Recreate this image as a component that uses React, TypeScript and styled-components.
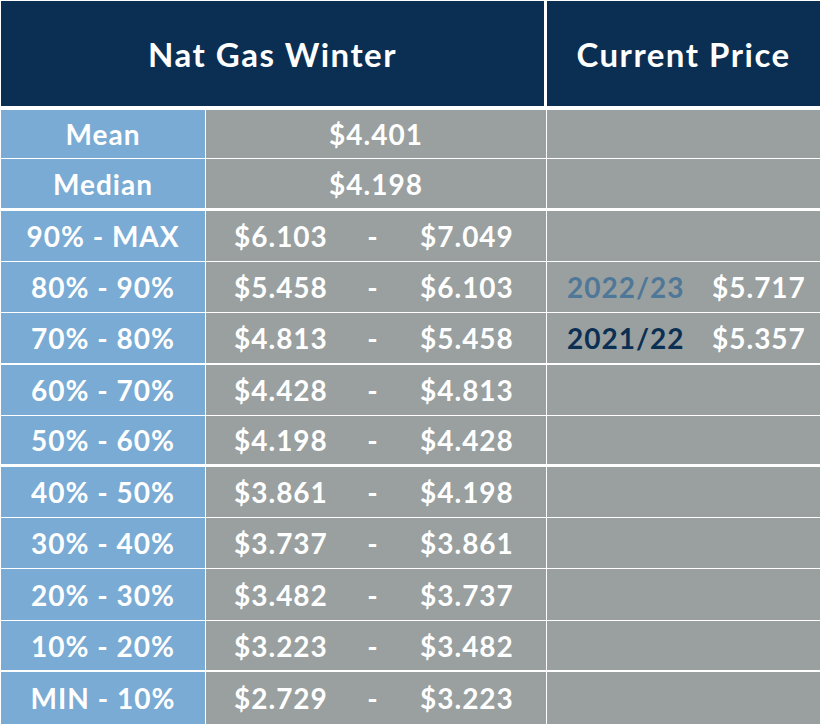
import React from "react";
import styled, { createGlobalStyle } from "styled-components";

type Tone = "light" | "dark";

type Row = {
  label: string;
  single?: string;
  low?: string;
  high?: string;
  year?: string;
  price?: string;
  tone?: Tone;
  height: number;
  gap: number;
};

const rows: Row[] = [
  { label: "Mean", single: "$4.401", height: 48, gap: 0 },
  { label: "Median", single: "$4.198", height: 49, gap: 1 },
  { label: "90% - MAX", low: "$6.103", high: "$7.049", height: 50, gap: 3 },
  { label: "80% - 90%", low: "$5.458", high: "$6.103", height: 50, gap: 1, year: "2022/23", price: "$5.717", tone: "light" },
  { label: "70% - 80%", low: "$4.813", high: "$5.458", height: 50, gap: 1, year: "2021/22", price: "$5.357", tone: "dark" },
  { label: "60% - 70%", low: "$4.428", high: "$4.813", height: 50, gap: 2 },
  { label: "50% - 60%", low: "$4.198", high: "$4.428", height: 48, gap: 1 },
  { label: "40% - 50%", low: "$3.861", high: "$4.198", height: 50, gap: 3 },
  { label: "30% - 40%", low: "$3.737", high: "$3.861", height: 50, gap: 1 },
  { label: "20% - 30%", low: "$3.482", high: "$3.737", height: 51, gap: 1 },
  { label: "10% - 20%", low: "$3.223", high: "$3.482", height: 49, gap: 1 },
  { label: "MIN - 10%", low: "$2.729", high: "$3.223", height: 52, gap: 2 },
];

const GlobalStyle = createGlobalStyle`
  *, *::before, *::after {
    box-sizing: border-box;
  }
  html, body {
    margin: 0;
    padding: 0;
    background: #ffffff;
  }
  body {
    font-family: "Lato", "Open Sans", sans-serif;
    -webkit-font-smoothing: antialiased;
  }
`;

const Table = styled.div`
  width: 820px;
  height: 724px;
  overflow: hidden;
  padding: 1px 0 0 1px;
  background: #ffffff;
  display: flex;
  flex-direction: column;
`;

const HeaderRow = styled.div`
  display: flex;
  gap: 3px;
  height: 105px;
  margin-bottom: 4px;
  flex-shrink: 0;
`;

const HeaderCell = styled.div<{ width?: number }>`
  ${(p) => (p.width ? `width: ${p.width}px; flex-shrink: 0;` : "flex: 1;")}
  background: #0b2f53;
  color: #ffffff;
  display: flex;
  align-items: center;
  justify-content: center;
  font-size: 33px;
  font-weight: 700;
  letter-spacing: 1.5px;
`;

const BodyRow = styled.div<{ height: number; gap: number }>`
  display: flex;
  gap: 1px;
  height: ${(p) => p.height}px;
  margin-top: ${(p) => p.gap}px;
  flex-shrink: 0;
  font-size: 28px;
  font-weight: 700;
  color: #ffffff;
  letter-spacing: 1px;
`;

const LabelCell = styled.div`
  width: 204px;
  flex-shrink: 0;
  background: #7aabd4;
  display: flex;
  align-items: center;
  justify-content: center;
`;

const ValueCell = styled.div<{ centered?: boolean }>`
  width: 340px;
  flex-shrink: 0;
  background: #99a09f;
  display: ${(p) => (p.centered ? "flex" : "grid")};
  justify-content: ${(p) => (p.centered ? "center" : "start")};
  grid-template-columns: 133px 12px auto;
  align-items: center;
  padding-left: ${(p) => (p.centered ? "0" : "28px")};
`;

const Dash = styled.span`
  text-align: center;
`;

const High = styled.span`
  margin-left: 41px;
`;

const CurrentCell = styled.div`
  flex: 1;
  min-width: 0;
  background: #99a09f;
  display: flex;
  align-items: center;
  padding-left: 20px;
`;

const Year = styled.span<{ tone: Tone }>`
  width: 145px;
  flex-shrink: 0;
  color: ${(p) => (p.tone === "light" ? "#4f7797" : "#0b2f53")};
`;

const App: React.FC = () => {
  return (
    <>
      <GlobalStyle />
      <Table>
        <HeaderRow>
          <HeaderCell width={543}>Nat Gas Winter</HeaderCell>
          <HeaderCell>Current Price</HeaderCell>
        </HeaderRow>
        {rows.map((row) => (
          <BodyRow key={row.label} height={row.height} gap={row.gap}>
            <LabelCell>{row.label}</LabelCell>
            {row.single ? (
              <ValueCell centered>{row.single}</ValueCell>
            ) : (
              <ValueCell>
                <span>{row.low}</span>
                <Dash>-</Dash>
                <High>{row.high}</High>
              </ValueCell>
            )}
            <CurrentCell>
              {row.year && row.tone ? (
                <>
                  <Year tone={row.tone}>{row.year}</Year>
                  <span>{row.price}</span>
                </>
              ) : null}
            </CurrentCell>
          </BodyRow>
        ))}
      </Table>
    </>
  );
};

export default App;
